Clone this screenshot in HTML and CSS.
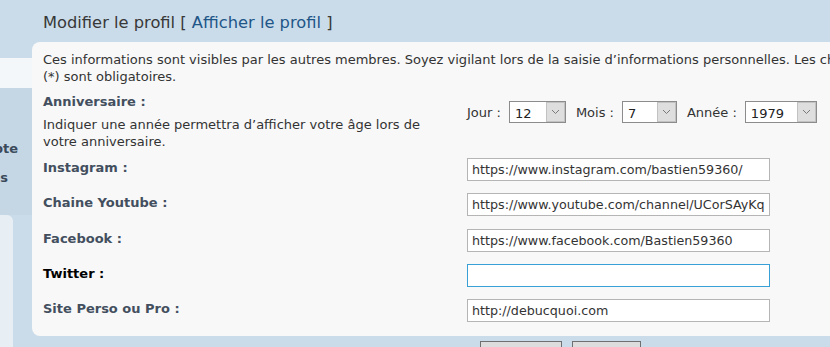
FILE: index.html
```html
<!DOCTYPE html>
<html lang="fr">
<head>
    <meta charset="UTF-8">
    <title>Modifier le profil</title>
    <link rel="stylesheet" href="styles.css">
</head>
<body>
    <div class="page">
        <aside class="side">
            <div class="side-top"></div>
            <div class="side-band"></div>
            <div class="side-menu">
                <div class="side-link">Mon compte</div>
                <div class="side-link side-link-short">Messages</div>
            </div>
            <div class="side-box"></div>
        </aside>

        <main class="main">
            <h2 class="title">Modifier le profil [ <a href="#">Afficher le profil</a> ]</h2>

            <div class="panel">
                <p class="intro">Ces informations sont visibles par les autres membres. Soyez vigilant lors de la saisie d’informations personnelles. Les champs marqués d’un astérisque (*) sont obligatoires.</p>

                <div class="row row-birthday">
                    <div class="label">
                        <b>Anniversaire :</b>
                        <span class="desc">Indiquer une année permettra d’afficher votre âge lors de votre anniversaire.</span>
                    </div>
                    <div class="field dates">
                        <span>Jour :</span>
                        <span class="sel sel-day">
                            <select><option>12</option></select>
                            <span class="sel-btn"><svg width="9" height="6" viewBox="0 0 9 6"><path d="M1 1l3.5 3.5L8 1" fill="none" stroke="#7a7a7a" stroke-width="1"/></svg></span>
                        </span>
                        <span>Mois :</span>
                        <span class="sel sel-month">
                            <select><option>7</option></select>
                            <span class="sel-btn"><svg width="9" height="6" viewBox="0 0 9 6"><path d="M1 1l3.5 3.5L8 1" fill="none" stroke="#7a7a7a" stroke-width="1"/></svg></span>
                        </span>
                        <span>Année :</span>
                        <span class="sel sel-year">
                            <select><option>1979</option></select>
                            <span class="sel-btn"><svg width="9" height="6" viewBox="0 0 9 6"><path d="M1 1l3.5 3.5L8 1" fill="none" stroke="#7a7a7a" stroke-width="1"/></svg></span>
                        </span>
                    </div>
                </div>

                <div class="row">
                    <div class="label"><b>Instagram :</b></div>
                    <div class="field"><input type="text" value="https://www.instagram.com/bastien59360/"></div>
                </div>
                <div class="row">
                    <div class="label"><b>Chaine Youtube :</b></div>
                    <div class="field"><input type="text" value="https://www.youtube.com/channel/UCorSAyKq8b1TvXc3Zx0pLmQ"></div>
                </div>
                <div class="row">
                    <div class="label"><b>Facebook :</b></div>
                    <div class="field"><input type="text" value="https://www.facebook.com/Bastien59360"></div>
                </div>
                <div class="row row-focus">
                    <div class="label"><b>Twitter :</b></div>
                    <div class="field"><input type="text" value=""></div>
                </div>
                <div class="row">
                    <div class="label"><b>Site Perso ou Pro :</b></div>
                    <div class="field"><input type="text" value="http://debucquoi.com"></div>
                </div>
            </div>

            <div class="buttons">
                <button class="btn btn-save">Envoyer</button>
                <button class="btn btn-reset">Annuler</button>
            </div>
        </main>
    </div>
</body>
</html>
```

FILE: styles.css
```css
* {
    margin: 0;
    padding: 0;
    box-sizing: border-box;
}

body {
    font-family: 'DejaVu Sans', Verdana, sans-serif;
    font-size: 13px;
    color: #333;
    background: #cadcea;
}

.page {
    display: flex;
    height: 347px;
    overflow: hidden;
}

/* left column, mostly hidden */
.side {
    flex: none;
    width: 32px;
    display: flex;
    flex-direction: column;
    overflow: hidden;
}

.side-top {
    height: 58px;
}

.side-band {
    height: 30px;
    background: #f3f7fa;
}

.side-menu {
    height: 127px;
    background: #c5d6e5;
    padding-top: 52px;
}

.side-link {
    display: flex;
    justify-content: flex-end;
    white-space: nowrap;
    padding-right: 14px;
    height: 29px;
    line-height: 17px;
    font-weight: bold;
    color: #3b4a5a;
}

.side-link-short {
    padding-right: 24px;
}

.side-box {
    flex: 1;
    width: 13px;
    background: #e7eff5;
    border-top-right-radius: 6px;
}

/* main */
.main {
    flex: none;
    width: 1027px;
}

.title {
    font-size: 16.3px;
    font-weight: normal;
    line-height: 20px;
    color: #383838;
    padding: 13px 0 9px 11px;
}

.title a {
    color: #1f5688;
    text-decoration: none;
}

.panel {
    background: #f8f8f8;
    border-radius: 8px 0 0 8px;
    padding: 9px 11px 14px 11px;
}

.intro {
    line-height: 17px;
    margin-bottom: 8px;
}

.row {
    display: flex;
    align-items: flex-start;
    margin-bottom: 12.25px;
}

.row-birthday {
    margin-bottom: 8px;
}

.row:last-child {
    margin-bottom: 0;
}

.label {
    width: 400px;
    margin-right: 24px;
    line-height: 17px;
    padding-top: 1px;
    color: #434f5e;
}

.row-birthday .label {
    padding-top: 0;
}

.desc {
    display: block;
    font-weight: normal;
    color: #333;
    margin-top: 6px;
}

.row-focus .label {
    color: #000;
}

.field input {
    display: block;
    width: 303px;
    height: 23px;
    padding: 0 4px;
    border: 1px solid #b5b5b5;
    background: #fff;
    font-family: 'DejaVu Sans', Verdana, sans-serif;
    font-size: 12.7px;
    color: #333;
    outline: none;
}

.row-focus input {
    border-color: #38a0d4;
}

.dates {
    display: flex;
    align-items: center;
    margin-top: 8px;
    color: #333;
}

.dates > span:not(.sel) {
    margin-right: 8px;
}

.sel {
    display: flex;
    height: 22px;
    border: 1px solid #8c8c8c;
    background: #fff;
    margin-right: 10px;
}

.sel select {
    flex: 1;
    min-width: 0;
    appearance: none;
    -webkit-appearance: none;
    border: none;
    background: transparent;
    font-family: 'DejaVu Sans', Verdana, sans-serif;
    font-size: 13px;
    color: #222;
    padding-left: 5px;
    padding-top: 2px;
    outline: none;
}

.sel-btn {
    width: 19px;
    display: flex;
    align-items: center;
    justify-content: center;
    background: #dedede;
    border: 1px solid #c2c2c2;
}

.sel-day {
    width: 57px;
}

.sel-month {
    width: 55px;
}

.sel-year {
    width: 72px;
}

.buttons {
    display: flex;
    gap: 10px;
    padding: 5px 0 0 448px;
}

.btn {
    height: 24px;
    border: 1px solid #707070;
    background: #dddddd;
    font-family: 'DejaVu Sans', Verdana, sans-serif;
    font-size: 11px;
    color: #222;
    padding-top: 10px;
}

.btn-save {
    width: 82px;
}

.btn-reset {
    width: 69px;
}
```
